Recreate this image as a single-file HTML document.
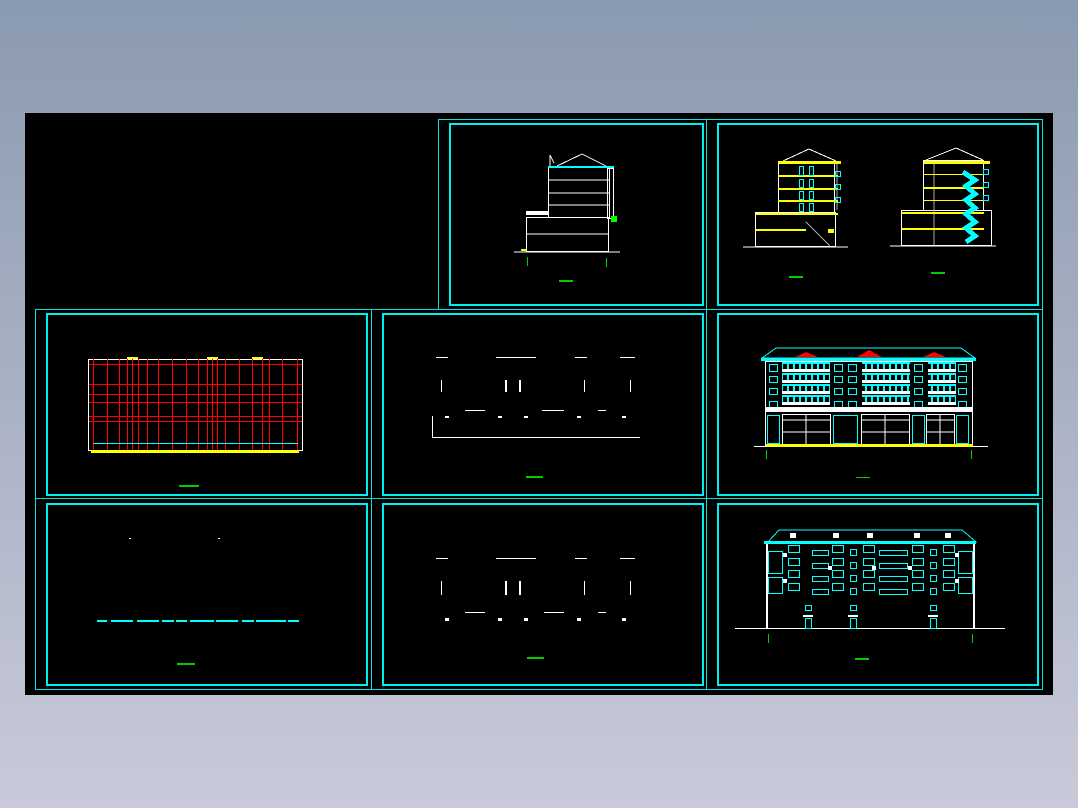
<!DOCTYPE html>
<html><head><meta charset="utf-8"><style>
html,body{margin:0;padding:0;width:1078px;height:808px;overflow:hidden;background:linear-gradient(#8a9ab0,#c9cad9);}
svg{position:absolute;left:0;top:0}
</style></head><body>
<svg width="1078" height="808" viewBox="0 0 1078 808" xmlns="http://www.w3.org/2000/svg" shape-rendering="crispEdges">
<defs>
<pattern id="bal" x="0" y="362" width="6" height="11" patternUnits="userSpaceOnUse">
<rect x="0" y="0" width="6" height="2" fill="#0ff"/><rect x="0" y="7" width="6" height="3" fill="#fff"/><rect x="1" y="2" width="2" height="5" fill="#0ff"/>
</pattern>
</defs>
<rect x="25" y="113" width="1028" height="582" fill="#000"/>
<g fill="none" stroke="#00e0e0" stroke-width="1">
<rect x="438.5" y="119.5" width="268" height="190"/>
<rect x="706.5" y="119.5" width="336" height="190"/>
<rect x="35.5" y="309.5" width="336" height="189"/>
<rect x="371.5" y="309.5" width="335" height="189"/>
<rect x="706.5" y="309.5" width="336" height="189"/>
<rect x="35.5" y="498.5" width="336" height="191"/>
<rect x="371.5" y="498.5" width="335" height="191"/>
<rect x="706.5" y="498.5" width="336" height="191"/>
</g>
<g fill="none" stroke="#00f0f0" stroke-width="2">
<rect x="450" y="124" width="253" height="181"/>
<rect x="718" y="124" width="320" height="181"/>
<rect x="47" y="314" width="320" height="181"/>
<rect x="383" y="314" width="320" height="181"/>
<rect x="718" y="314" width="320" height="181"/>
<rect x="47" y="504" width="320" height="181"/>
<rect x="383" y="504" width="320" height="181"/>
<rect x="718" y="504" width="320" height="181"/>
</g>
<!-- panel1 section -->
<g stroke="#fff" stroke-width="1" fill="none">
<polyline points="550,166 550,155 554,163"/>
<polyline points="557,166 582,154 606,166"/>
<rect x="548.5" y="167.5" width="61" height="50"/>
<line x1="548" y1="180" x2="609" y2="180"/><line x1="548" y1="193" x2="609" y2="193"/><line x1="548" y1="205" x2="609" y2="205"/>
<rect x="607.5" y="168.5" width="6" height="50"/>
<rect x="526.5" y="217.5" width="82" height="34"/>
<line x1="526" y1="234" x2="608" y2="234"/>
<line x1="514" y1="252" x2="620" y2="252"/>
</g>
<rect x="548" y="166" width="66" height="2" fill="#0ff"/>
<rect x="526" y="211" width="22" height="4" fill="#fff"/>
<rect x="611" y="216" width="6" height="6" fill="#0f0"/>
<rect x="521" y="249" width="5" height="2" fill="#ff0"/>
<g fill="#0c0"><rect x="527" y="257" width="1" height="9"/><rect x="606" y="258" width="1" height="9"/><rect x="559" y="280" width="14" height="2"/>
<rect x="789" y="276" width="14" height="2"/><rect x="931" y="272" width="14" height="2"/>
<rect x="179" y="485" width="20" height="2"/><rect x="526" y="476" width="17" height="2"/><rect x="856" y="477" width="14" height="1"/>
<rect x="177" y="663" width="18" height="2"/><rect x="527" y="657" width="17" height="2"/><rect x="855" y="658" width="14" height="2"/>
<rect x="766" y="450" width="1" height="9"/><rect x="971" y="450" width="1" height="9"/>
<rect x="768" y="634" width="1" height="9"/><rect x="972" y="634" width="1" height="9"/></g>
<!-- panel2 sections -->
<g stroke="#fff" fill="none" stroke-width="1">
<polyline points="783,161 809,149 836,161"/><polyline points="926,160 956,148 983,160"/>
<line x1="743" y1="247" x2="848" y2="247"/><line x1="890" y1="246" x2="996" y2="246"/>
<rect x="755.5" y="212.5" width="80" height="34"/><rect x="778.5" y="162.5" width="56" height="50"/>
<rect x="901.5" y="210.5" width="90" height="35"/><rect x="923.5" y="160.5" width="60" height="50"/>
<line x1="806" y1="222" x2="830" y2="246" stroke="#aaa"/>
<line x1="837" y1="164" x2="837" y2="210" stroke="#aaa"/>
<line x1="934" y1="164" x2="934" y2="245" stroke="#aaa"/>
</g>
<g fill="#ff0">
<rect x="778" y="161" width="63" height="3"/><rect x="778" y="175" width="60" height="2"/><rect x="778" y="188" width="60" height="2"/><rect x="778" y="200" width="60" height="2"/><rect x="756" y="213" width="82" height="2"/><rect x="756" y="229" width="50" height="2"/><rect x="828" y="229" width="6" height="4"/>
<rect x="924" y="161" width="66" height="3"/><rect x="924" y="174" width="60" height="1"/><rect x="924" y="187" width="60" height="2"/><rect x="924" y="200" width="60" height="1"/><rect x="902" y="212" width="82" height="2"/><rect x="902" y="228" width="82" height="2"/>
</g>
<g fill="none" stroke="#0ff"><rect x="799.5" y="166.5" width="4" height="9"/><rect x="809.5" y="166.5" width="4" height="9"/><rect x="799.5" y="179.5" width="4" height="8"/><rect x="809.5" y="179.5" width="4" height="8"/><rect x="799.5" y="191.5" width="4" height="8"/><rect x="809.5" y="191.5" width="4" height="8"/><rect x="799.5" y="203.5" width="4" height="8"/><rect x="809.5" y="203.5" width="4" height="8"/>
<rect x="983.5" y="169.5" width="5" height="5"/><rect x="983.5" y="182.5" width="5" height="5"/><rect x="983.5" y="195.5" width="5" height="5"/><rect x="835.5" y="171.5" width="5" height="5"/><rect x="835.5" y="184.5" width="5" height="5"/><rect x="835.5" y="197.5" width="5" height="5"/></g>
<path d="M963,172 L975,180 L966,186 L975,194 L966,200 L975,208 L966,214 L975,222 L966,228 L975,236 L966,242" stroke="#0ff" stroke-width="5" fill="none"/>
<!-- middle-left red grid -->
<rect x="88.5" y="359.5" width="214" height="91" fill="none" stroke="#fff"/>
<g fill="#f00">
<rect x="93" y="359" width="1" height="91"/><rect x="107" y="359" width="1" height="91"/><rect x="119" y="359" width="1" height="91"/><rect x="127" y="359" width="1" height="91"/><rect x="132" y="359" width="1" height="91"/><rect x="138" y="359" width="1" height="91"/><rect x="147" y="359" width="1" height="91"/><rect x="158" y="359" width="1" height="91"/><rect x="172" y="359" width="1" height="91"/><rect x="186" y="359" width="1" height="91"/><rect x="198" y="359" width="1" height="91"/><rect x="207" y="359" width="1" height="91"/><rect x="212" y="359" width="1" height="91"/><rect x="217" y="359" width="1" height="91"/><rect x="225" y="359" width="1" height="91"/><rect x="239" y="359" width="1" height="91"/><rect x="252" y="359" width="1" height="91"/><rect x="262" y="359" width="1" height="91"/><rect x="269" y="359" width="1" height="91"/><rect x="282" y="359" width="1" height="91"/><rect x="297" y="359" width="1" height="91"/>
<rect x="89" y="364" width="213" height="1"/><rect x="89" y="384" width="213" height="1"/><rect x="89" y="394" width="213" height="1"/><rect x="89" y="402" width="213" height="1"/><rect x="89" y="416" width="213" height="1"/><rect x="89" y="421" width="213" height="1"/>
</g>
<rect x="93" y="443" width="205" height="1" fill="#0ff"/>
<rect x="91" y="450" width="208" height="3" fill="#ff0"/>
<rect x="127" y="357" width="11" height="2" fill="#ff0"/><rect x="207" y="357" width="11" height="2" fill="#ff0"/><rect x="252" y="357" width="11" height="2" fill="#ff0"/>
<g fill="#fff">
<rect x="432" y="416" width="1" height="21"/><rect x="432" y="437" width="208" height="1"/>
<rect x="436" y="357" width="12" height="1"/><rect x="496" y="357" width="40" height="1"/><rect x="575" y="357" width="12" height="1"/><rect x="620" y="357" width="15" height="1"/>
<rect x="441" y="380" width="1" height="12"/><rect x="505" y="380" width="2" height="12"/><rect x="519" y="380" width="2" height="12"/><rect x="584" y="380" width="1" height="12"/><rect x="630" y="380" width="1" height="12"/>
<rect x="465" y="410" width="20" height="1"/><rect x="542" y="410" width="22" height="1"/><rect x="598" y="410" width="8" height="1"/>
<rect x="445" y="416" width="4" height="2"/><rect x="498" y="416" width="4" height="2"/><rect x="524" y="416" width="4" height="2"/><rect x="577" y="416" width="4" height="2"/><rect x="622" y="416" width="4" height="2"/>
<rect x="436" y="558" width="12" height="1"/><rect x="496" y="558" width="40" height="1"/><rect x="575" y="558" width="12" height="1"/><rect x="620" y="558" width="15" height="1"/>
<rect x="441" y="581" width="1" height="14"/><rect x="505" y="581" width="2" height="14"/><rect x="519" y="581" width="2" height="14"/><rect x="584" y="581" width="1" height="14"/><rect x="630" y="581" width="1" height="14"/>
<rect x="465" y="612" width="20" height="1"/><rect x="544" y="612" width="20" height="1"/><rect x="598" y="612" width="8" height="1"/>
<rect x="445" y="618" width="4" height="3"/><rect x="498" y="618" width="4" height="3"/><rect x="524" y="618" width="4" height="3"/><rect x="577" y="618" width="4" height="3"/><rect x="622" y="618" width="4" height="3"/>
<rect x="129" y="538" width="2" height="1"/><rect x="218" y="538" width="2" height="1"/>
</g>
<g fill="#0ff"><rect x="97" y="620" width="10" height="2"/><rect x="111" y="620" width="22" height="2"/><rect x="137" y="620" width="22" height="2"/><rect x="162" y="620" width="12" height="2"/><rect x="176" y="620" width="11" height="2"/><rect x="190" y="620" width="24" height="2"/><rect x="216" y="620" width="22" height="2"/><rect x="242" y="620" width="12" height="2"/><rect x="256" y="620" width="30" height="2"/><rect x="288" y="620" width="11" height="2"/></g>
<!-- middle-right elevation -->
<polygon points="762,358 776,348 961,348 975,358" fill="none" stroke="#0ff"/>
<rect x="761" y="358" width="215" height="3" fill="#0ff"/>
<g fill="#f00"><path d="M795,357 L806,352 L818,357Z"/><path d="M857,357 L869,350 L882,357Z"/><path d="M923,357 L934,352 L946,357Z"/></g>
<rect x="765.5" y="361.5" width="207" height="84" fill="none" stroke="#fff"/>
<rect x="782" y="362" width="48" height="44" fill="url(#bal)"/><rect x="862" y="362" width="48" height="44" fill="url(#bal)"/><rect x="928" y="362" width="28" height="44" fill="url(#bal)"/>
<g fill="none" stroke="#0ff">
<rect x="769.5" y="364.5" width="8" height="7"/><rect x="769.5" y="376.5" width="8" height="6"/><rect x="769.5" y="388.5" width="8" height="6"/><rect x="769.5" y="401.5" width="8" height="6"/>
<rect x="834.5" y="364.5" width="8" height="7"/><rect x="848.5" y="364.5" width="8" height="7"/><rect x="834.5" y="376.5" width="8" height="6"/><rect x="848.5" y="376.5" width="8" height="6"/><rect x="834.5" y="388.5" width="8" height="6"/><rect x="848.5" y="388.5" width="8" height="6"/><rect x="834.5" y="401.5" width="8" height="6"/><rect x="848.5" y="401.5" width="8" height="6"/>
<rect x="914.5" y="364.5" width="8" height="7"/><rect x="914.5" y="376.5" width="8" height="6"/><rect x="914.5" y="388.5" width="8" height="6"/><rect x="914.5" y="401.5" width="8" height="6"/>
<rect x="958.5" y="364.5" width="8" height="7"/><rect x="958.5" y="376.5" width="8" height="6"/><rect x="958.5" y="388.5" width="8" height="6"/><rect x="958.5" y="401.5" width="8" height="6"/>
<rect x="767.5" y="415.5" width="12" height="28"/><rect x="833.5" y="415.5" width="24" height="28"/><rect x="912.5" y="415.5" width="12" height="28"/><rect x="956.5" y="415.5" width="12" height="28"/>
</g>
<rect x="766" y="407" width="207" height="5" fill="#fff"/>
<g fill="none" stroke="#fff"><rect x="782.5" y="414.5" width="48" height="30"/><rect x="861.5" y="414.5" width="48" height="30"/><rect x="926.5" y="414.5" width="28" height="30"/>
<line x1="783" y1="420" x2="830" y2="420"/><line x1="862" y1="420" x2="909" y2="420"/><line x1="927" y1="420" x2="954" y2="420"/>
<line x1="783" y1="432" x2="830" y2="432"/><line x1="862" y1="432" x2="909" y2="432"/><line x1="927" y1="432" x2="954" y2="432"/>
<line x1="806" y1="415" x2="806" y2="444"/><line x1="885" y1="415" x2="885" y2="444"/><line x1="940" y1="415" x2="940" y2="444"/></g>
<rect x="754" y="446" width="234" height="1" fill="#fff"/>
<rect x="766" y="444" width="207" height="3" fill="#ff0"/>
<!-- bottom-right elevation -->
<polygon points="768,542 779,530 962,530 976,542" fill="none" stroke="#0ff"/>
<rect x="764" y="541" width="212" height="3" fill="#0ff"/>
<g fill="#fff"><rect x="766" y="544" width="2" height="84"/><rect x="973" y="544" width="2" height="84"/><rect x="735" y="628" width="270" height="1"/>
<rect x="790" y="533" width="6" height="5"/><rect x="833" y="533" width="6" height="5"/><rect x="867" y="533" width="6" height="5"/><rect x="914" y="533" width="6" height="5"/><rect x="945" y="533" width="6" height="5"/></g>
<g fill="none" stroke="#0ff">
<rect x="788.5" y="545.5" width="11" height="7"/><rect x="788.5" y="558.5" width="11" height="7"/><rect x="788.5" y="570.5" width="11" height="7"/><rect x="788.5" y="583.5" width="11" height="7"/>
<rect x="812.5" y="550.5" width="16" height="5"/><rect x="812.5" y="563.5" width="16" height="5"/><rect x="812.5" y="576.5" width="16" height="5"/><rect x="812.5" y="589.5" width="16" height="5"/>
<rect x="832.5" y="545.5" width="11" height="7"/><rect x="832.5" y="558.5" width="11" height="7"/><rect x="832.5" y="570.5" width="11" height="7"/><rect x="832.5" y="583.5" width="11" height="7"/>
<rect x="850.5" y="549.5" width="6" height="6"/><rect x="850.5" y="562.5" width="6" height="6"/><rect x="850.5" y="575.5" width="6" height="6"/><rect x="850.5" y="588.5" width="6" height="6"/>
<rect x="863.5" y="545.5" width="11" height="7"/><rect x="863.5" y="558.5" width="11" height="7"/><rect x="863.5" y="570.5" width="11" height="7"/><rect x="863.5" y="583.5" width="11" height="7"/>
<rect x="879.5" y="550.5" width="28" height="5"/><rect x="879.5" y="563.5" width="28" height="5"/><rect x="879.5" y="576.5" width="28" height="5"/><rect x="879.5" y="589.5" width="28" height="5"/>
<rect x="912.5" y="545.5" width="11" height="7"/><rect x="912.5" y="558.5" width="11" height="7"/><rect x="912.5" y="570.5" width="11" height="7"/><rect x="912.5" y="583.5" width="11" height="7"/>
<rect x="930.5" y="549.5" width="6" height="6"/><rect x="930.5" y="562.5" width="6" height="6"/><rect x="930.5" y="575.5" width="6" height="6"/><rect x="930.5" y="588.5" width="6" height="6"/>
<rect x="943.5" y="545.5" width="11" height="7"/><rect x="943.5" y="558.5" width="11" height="7"/><rect x="943.5" y="570.5" width="11" height="7"/><rect x="943.5" y="583.5" width="11" height="7"/>
<rect x="768.5" y="551.5" width="14" height="22"/><rect x="958.5" y="551.5" width="14" height="22"/>
<rect x="768.5" y="577.5" width="14" height="16"/><rect x="958.5" y="577.5" width="14" height="16"/>
<rect x="805.5" y="605.5" width="6" height="5"/><rect x="850.5" y="605.5" width="6" height="5"/><rect x="930.5" y="605.5" width="6" height="5"/>
<rect x="805.5" y="618.5" width="6" height="10"/><rect x="850.5" y="618.5" width="6" height="10"/><rect x="930.5" y="618.5" width="6" height="10"/>
</g>
<g fill="#fff"><rect x="803" y="615" width="10" height="2"/><rect x="848" y="615" width="10" height="2"/><rect x="928" y="615" width="10" height="2"/>
<rect x="783" y="553" width="4" height="4"/><rect x="783" y="579" width="4" height="4"/><rect x="955" y="553" width="4" height="4"/><rect x="955" y="579" width="4" height="4"/><rect x="828" y="566" width="4" height="4"/><rect x="872" y="566" width="4" height="4"/><rect x="908" y="566" width="4" height="4"/></g>
</svg>
</body></html>
